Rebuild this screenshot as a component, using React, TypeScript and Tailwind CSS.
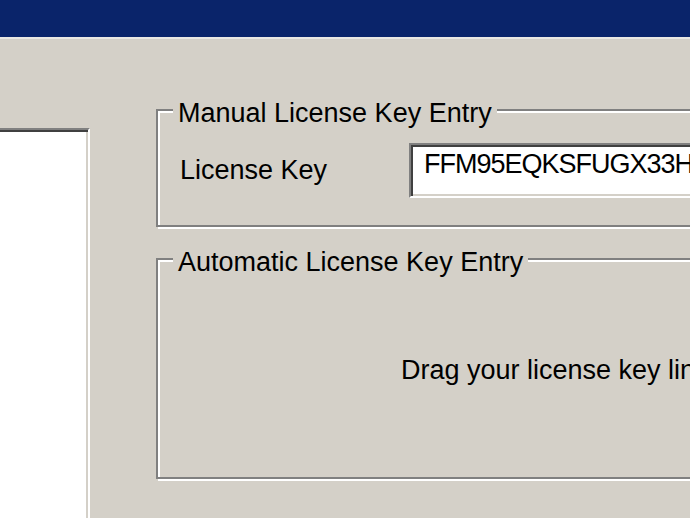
const FONT = "font-['Liberation_Sans',Arial,sans-serif]";

function GroupBox({ title, className, children }: { title: string; className: string; children?: React.ReactNode }) {
  return (
    <div
      className={`relative border-2 border-[#808080] shadow-[inset_2px_2px_0_#ffffff,2px_2px_0_#ffffff] ${className}`}
    >
      <span className="absolute left-[15px] top-[-11px] bg-[#d4d0c8] px-[5px] text-[27px] leading-[27px] text-black whitespace-nowrap">
        {title}
      </span>
      {children}
    </div>
  );
}

export default function App() {
  return (
    <div className={`w-[690px] h-[518px] overflow-hidden bg-[#d4d0c8] flex flex-col ${FONT}`}>
      <div className="h-[39px] shrink-0 bg-[#0a246a] border-b-2 border-[#e9e7e3]" />
      <div className="flex items-start">
        <div className="mt-[89px] w-[90px] h-[420px] shrink-0 bg-white border-t-2 border-r-2 border-t-[#808080] border-r-white shadow-[inset_0_2px_0_#404040,inset_-2px_0_0_#d4d0c8]" />
        <div className="ml-[66px] mt-[70px] w-[620px] shrink-0 flex flex-col">
          <GroupBox title="Manual License Key Entry" className="h-[118px]">
            <div className="flex items-start pt-[32px] pl-[22px]">
              <span className="w-[229px] shrink-0 mt-[14px] text-[27px] leading-[27px] text-black">License Key</span>
              <div className="h-[55px] flex-1 overflow-hidden bg-white border-2 border-t-[#808080] border-l-[#808080] border-b-white border-r-white shadow-[inset_2px_2px_0_#404040,inset_-2px_-2px_0_#d4d0c8] pl-[13px] pt-[6px]">
                <span className="text-[27px] leading-[27px] text-black whitespace-nowrap tracking-[-1px]">
                  FFM95EQKSFUGX33H2WQ7
                </span>
              </div>
            </div>
          </GroupBox>
          <GroupBox title="Automatic License Key Entry" className="mt-[31px] h-[221px]">
            <p className="pt-[97px] pl-[243px] text-[27px] leading-[27px] text-black whitespace-nowrap">
              Drag your license key link here
            </p>
          </GroupBox>
        </div>
      </div>
    </div>
  );
}
